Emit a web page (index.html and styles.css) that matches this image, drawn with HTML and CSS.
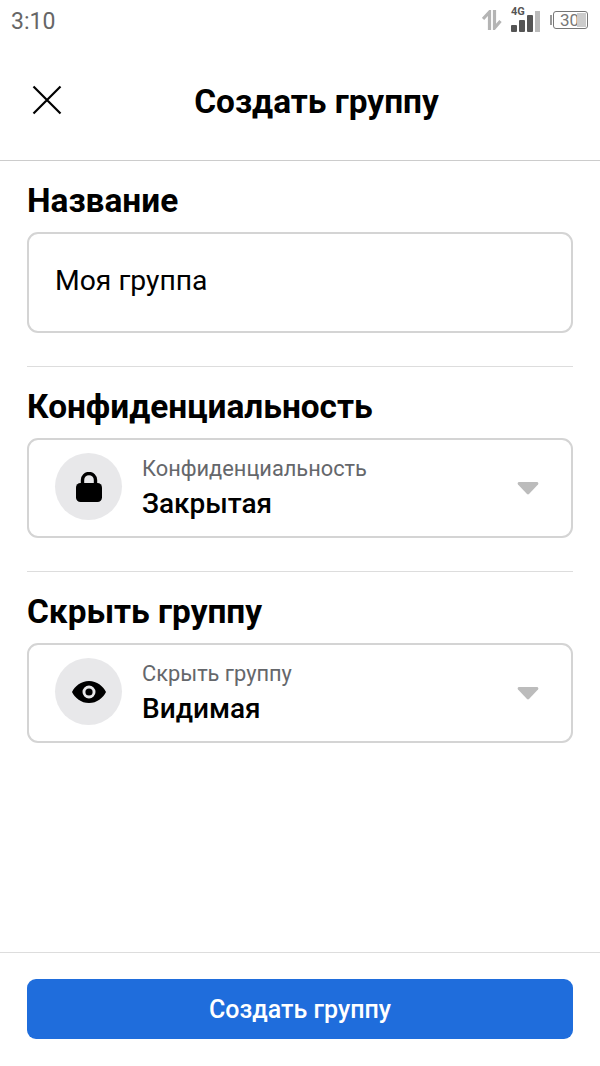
FILE: index.html
```html
<!DOCTYPE html>
<html lang="ru">
<head>
<meta charset="utf-8">
<title>Создать группу</title>
<link rel="stylesheet" href="styles.css">
</head>
<body>
<div class="page">
  <div class="status">
    <span class="time">3:10</span>
    <div class="status-icons">
      <svg class="ic-arrows" width="20" height="20" viewBox="0 0 20 20"><path d="M7.500 20V2L1 9" fill="none" stroke="#b4b4b4" stroke-width="3.200"/><path d="M12.500 0v18l6-7" fill="none" stroke="#b4b4b4" stroke-width="3.200"/></svg>
      <div class="signal">
        <span class="g4">4G</span>
        <svg width="29" height="21" viewBox="0 0 29 21"><rect x="0" y="14" width="6" height="7" rx="1" fill="#555"/><rect x="8" y="9" width="6" height="12" rx="1" fill="#555"/><rect x="16" y="4" width="6" height="17" rx="1" fill="#555"/><rect x="24" y="0" width="5" height="21" fill="#bbb"/></svg>
      </div>
      <div class="battery-wrap">
        <span class="nub"></span>
        <div class="battery"><span class="bat-text">30</span><span class="bat-fill"></span></div>
      </div>
    </div>
  </div>
  <header class="top">
    <svg class="close" width="30" height="30" viewBox="0 0 30 30"><path d="M1.500 1.500l27 27M28.500 1.500l-27 27" stroke="#000" stroke-width="2.200" fill="none"/></svg>
    <h1 class="title">Создать группу</h1>
  </header>
  <main class="content">
    <section class="sec sec-first">
      <h2 class="label">Название</h2>
      <div class="input">Моя группа</div>
    </section>
    <section class="sec">
      <h2 class="label">Конфиденциальность</h2>
      <div class="select">
        <span class="circle">
          <svg width="26" height="30" viewBox="0 0 26 30"><path d="M6.500 14V8a6.500 6.500 0 0 1 13 0V14" fill="none" stroke="#000" stroke-width="3.400"/><rect x="0" y="11" width="26" height="19" rx="4.500" fill="#000"/></svg>
        </span>
        <span class="sel-text"><span class="sel-small">Конфиденциальность</span><span class="sel-main">Закрытая</span></span>
        <svg class="caret" width="22" height="13" viewBox="0 0 22 13"><path d="M2 0h18a1.500 1.500 0 0 1 1 2.500l-9 9.500a1.500 1.500 0 0 1-2 0L1 2.500A1.500 1.500 0 0 1 2 0z" fill="#bcbcbc"/></svg>
      </div>
    </section>
    <section class="sec">
      <h2 class="label">Скрыть группу</h2>
      <div class="select">
        <span class="circle">
          <svg width="34" height="22" viewBox="0 0 34 22"><path fill-rule="evenodd" d="M17 0c8 0 14 5 17 11-3 6-9 11-17 11S3 17 0 11C3 5 9 0 17 0zm0 4.500a6.500 6.500 0 1 0 0 13 6.500 6.500 0 0 0 0-13z" fill="#000"/><circle cx="17" cy="11" r="3.600" fill="#000"/></svg>
        </span>
        <span class="sel-text"><span class="sel-small">Скрыть группу</span><span class="sel-main">Видимая</span></span>
        <svg class="caret" width="22" height="13" viewBox="0 0 22 13"><path d="M2 0h18a1.500 1.500 0 0 1 1 2.500l-9 9.500a1.500 1.500 0 0 1-2 0L1 2.500A1.500 1.500 0 0 1 2 0z" fill="#bcbcbc"/></svg>
      </div>
    </section>
  </main>
  <footer class="foot">
    <div class="btn">Создать группу</div>
  </footer>
</div>
</body>
</html>
```
FILE: styles.css
```css
* { box-sizing: border-box; }
html, body { margin: 0; padding: 0; background: #fff; }
body { font-family: Roboto, "Liberation Sans", sans-serif; color: #000; }
.page { width: 600px; height: 1066px; display: flex; flex-direction: column; }
.status { height: 44px; padding: 0 12px 2px 11px; display: flex; align-items: center; justify-content: space-between; flex: none; }
.time { font-size: 23px; color: #666; }
.status-icons { display: flex; align-items: center; margin-bottom: 2px; }
.ic-arrows { margin-right: 9px; }
.signal { position: relative; width: 29px; height: 24px; display: flex; align-items: flex-end; margin-right: 10px; }
.g4 { position: absolute; left: 0; top: -3px; font-size: 11px; font-weight: 700; color: #555; }
.battery-wrap { display: flex; align-items: center; }
.nub { width: 2px; height: 10px; background: #999; margin-right: 1px; }
.battery { width: 35px; height: 18px; border: 1.500px solid #777; border-radius: 3px; position: relative; display: flex; align-items: center; padding-left: 6px; }
.bat-text { font-size: 17px; color: #777; line-height: 1; position: relative; }
.bat-fill { position: absolute; right: 1px; top: 1px; bottom: 1px; width: 9px; background: #ccc; z-index: 0; }
.top { height: 117px; flex: none; border-bottom: 1px solid #ccc; display: flex; align-items: center; justify-content: center; position: relative; padding: 0 0 2px 33px; }
.close { position: absolute; left: 32px; top: 41px; }
.title { margin: 0; font-size: 33.400px; font-weight: 700; }
.content { flex: 1; padding: 0 27px; }
.sec { padding-top: 21px; border-top: 1px solid #ddd; margin-top: 33px; }
.sec-first { border-top: 0; padding-top: 21px; margin-top: 0; }
.label { margin: 0 0 12px; font-size: 33.400px; font-weight: 700; line-height: 38px; }
.input { height: 101px; border: 2px solid #d4d4d4; border-radius: 11px; display: flex; align-items: center; padding-left: 26px; font-size: 28.300px; padding-bottom: 5px; }
.select { height: 100px; border: 2px solid #d4d4d4; border-radius: 11px; display: flex; align-items: center; padding: 0 32px 3px 26px; }
.circle { width: 67px; height: 67px; border-radius: 50%; background: #e8e8ea; display: flex; align-items: center; justify-content: center; flex: none; margin-right: 20px; }
.sel-text { display: flex; flex-direction: column; flex: 1; }
.sel-small { font-size: 21.800px; color: #65676b; line-height: 33px; }
.sel-main { font-size: 28px; font-weight: 500; line-height: 37px; }
.caret { flex: none; margin-top: 3px; }
.foot { height: 114px; flex: none; border-top: 1px solid #ddd; padding: 26px 27px 0; }
.btn { height: 60px; background: #1f6ddc; border-radius: 9px; color: #fff; font-size: 25px; font-weight: 500; display: flex; align-items: center; justify-content: center; }
```
